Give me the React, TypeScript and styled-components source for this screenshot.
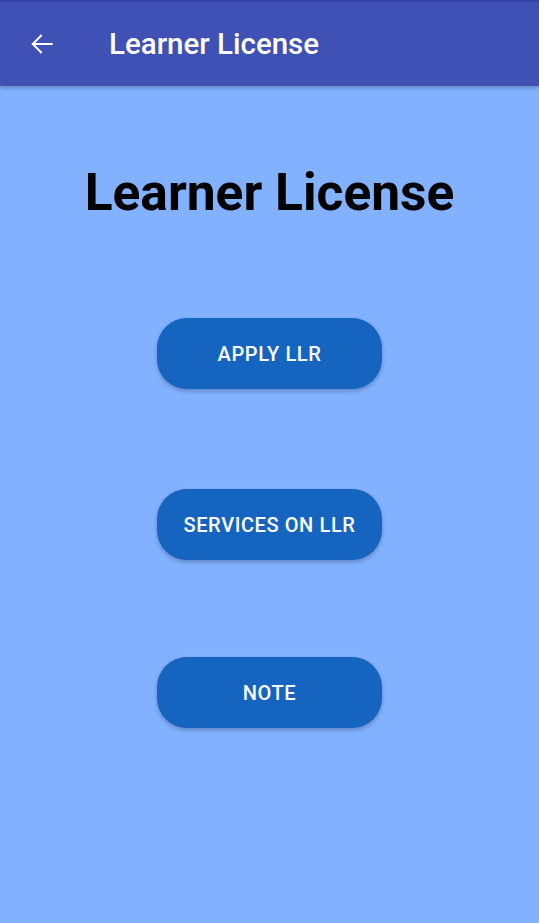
import React from "react";
import styled, { createGlobalStyle } from "styled-components";

const Global = createGlobalStyle`
  html, body { margin: 0; padding: 0; }
  body { font-family: Roboto, "Noto Sans", sans-serif; background: #82b1ff; }
`;

const Page = styled.div`
  width: 539px;
  height: 923px;
  background: #82b1ff;
  display: flex;
  flex-direction: column;
  overflow: hidden;
`;

const AppBar = styled.header`
  height: 84px;
  background: #3f51b5;
  border-top: 2px solid #3545a8;
  display: flex;
  align-items: center;
  box-shadow: 0 2px 4px rgba(0, 0, 0, 0.25);
  position: relative;
  z-index: 1;
`;

const BackButton = styled.button`
  width: 32px;
  height: 32px;
  margin-left: 26px;
  padding: 0;
  border: none;
  background: none;
  display: flex;
  align-items: center;
  justify-content: center;
  color: #fff;
`;

const BarTitle = styled.h1`
  margin: 0 0 0 51px;
  font-size: 29.5px;
  font-weight: 500;
  color: #fff;
`;

const Content = styled.main`
  display: flex;
  flex-direction: column;
  align-items: center;
`;

const Heading = styled.h2`
  margin: 78px 0 0;
  font-size: 51.5px;
  font-weight: 700;
  color: #000;
  line-height: 58px;
`;

const Button = styled.button<{ $top: number }>`
  margin-top: ${(p) => p.$top}px;
  width: 225px;
  height: 71px;
  border: none;
  border-radius: 30px;
  background: #1565c0;
  color: #fff;
  font-family: Roboto, sans-serif;
  font-size: 20px;
  font-weight: 500;
  letter-spacing: 0.6px;
  padding: 0;
  box-shadow: 0 2px 4px rgba(0, 0, 0, 0.25);
`;

export default function App() {
  return (
    <Page>
      <Global />
      <AppBar>
        <BackButton aria-label="back">
          <svg width="32" height="32" viewBox="0 0 24 24" fill="#fff">
            <path d="M20 11.2H6.9l5.4-5.4-1.05-1.05L4 12l7.25 7.25 1.05-1.05-5.4-5.4H20z" />
          </svg>
        </BackButton>
        <BarTitle>Learner License</BarTitle>
      </AppBar>
      <Content>
        <Heading>Learner License</Heading>
        <Button $top={96}>APPLY LLR</Button>
        <Button $top={100}>SERVICES ON LLR</Button>
        <Button $top={97}>NOTE</Button>
      </Content>
    </Page>
  );
}
